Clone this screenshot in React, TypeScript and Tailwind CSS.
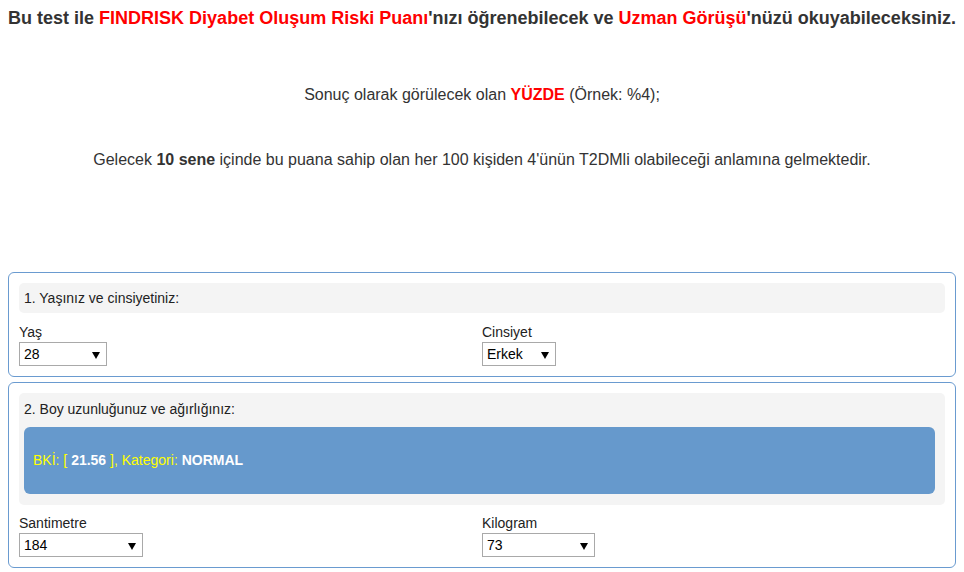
import React from "react";

function Select({ value, width }: { value: string; width: string }) {
  return (
    <div className={`relative h-[24px] ${width} border border-[#a9a9a9] bg-white`}>
      <div className="pl-[4px] text-[14px] leading-[22px] text-black">{value}</div>
      <svg className="absolute right-[6px] top-[9px]" width="8" height="7" viewBox="0 0 8 7">
        <path d="M0 0 L8 0 L4 7 Z" fill="#000" />
      </svg>
    </div>
  );
}

export default function App() {
  return (
    <div className="w-[964px] h-[572px] bg-white text-[#333] overflow-hidden" style={{ fontFamily: '"Liberation Sans", Arial, sans-serif' }}>
      <div className="pt-[8px] text-center text-[18px] font-bold leading-[20px]">
        Bu test ile <span className="text-[#ff0000]">FINDRISK Diyabet Oluşum Riski Puanı</span>'nızı öğrenebilecek ve{" "}
        <span className="text-[#ff0000]">Uzman Görüşü</span>'nüzü okuyabileceksiniz.
      </div>
      <div className="mt-[57px] text-center text-[16px] leading-[20px]">
        Sonuç olarak görülecek olan <span className="font-bold text-[#ff0000]">YÜZDE</span> (Örnek: %4);
      </div>
      <div className="mt-[45px] text-center text-[16px] leading-[20px]">
        Gelecek <span className="font-bold">10 sene</span> içinde bu puana sahip olan her 100 kişiden 4'ünün T2DMli olabileceği anlamına gelmektedir.
      </div>

      <div className="mx-[8px] mt-[102px] rounded-[6px] border border-[#6a9bd0] p-[10px] text-[14px] text-[#222]">
        <div className="mb-[9px] h-[30px] rounded-[5px] bg-[#f4f4f4] px-[5px] leading-[30px]">1. Yaşınız ve cinsiyetiniz:</div>
        <div className="grid grid-cols-2">
          <div>
            <div className="leading-[20px]">Yaş</div>
            <Select value="28" width="w-[88px]" />
          </div>
          <div>
            <div className="leading-[20px]">Cinsiyet</div>
            <Select value="Erkek" width="w-[74px]" />
          </div>
        </div>
      </div>

      <div className="mx-[8px] mt-[5px] rounded-[6px] border border-[#6a9bd0] p-[10px] text-[14px] text-[#222]">
        <div className="mb-[8px] rounded-[5px] bg-[#f4f4f4] pl-[5px] pr-[10px] pt-[6px] pb-[11px]">
          <div className="leading-[20px]">2. Boy uzunluğunuz ve ağırlığınız:</div>
          <div className="mt-[8px] flex h-[67px] items-center rounded-[6px] bg-[#6699cc] px-[9px] text-[14px] text-[#ffff00]">
            <span>
              BKİ: [ <span className="font-bold text-white">21.56</span> ], Kategori: <span className="font-bold text-white">NORMAL</span>
            </span>
          </div>
        </div>
        <div className="grid grid-cols-2">
          <div>
            <div className="leading-[20px]">Santimetre</div>
            <Select value="184" width="w-[124px]" />
          </div>
          <div>
            <div className="leading-[20px]">Kilogram</div>
            <Select value="73" width="w-[113px]" />
          </div>
        </div>
      </div>
    </div>
  );
}
